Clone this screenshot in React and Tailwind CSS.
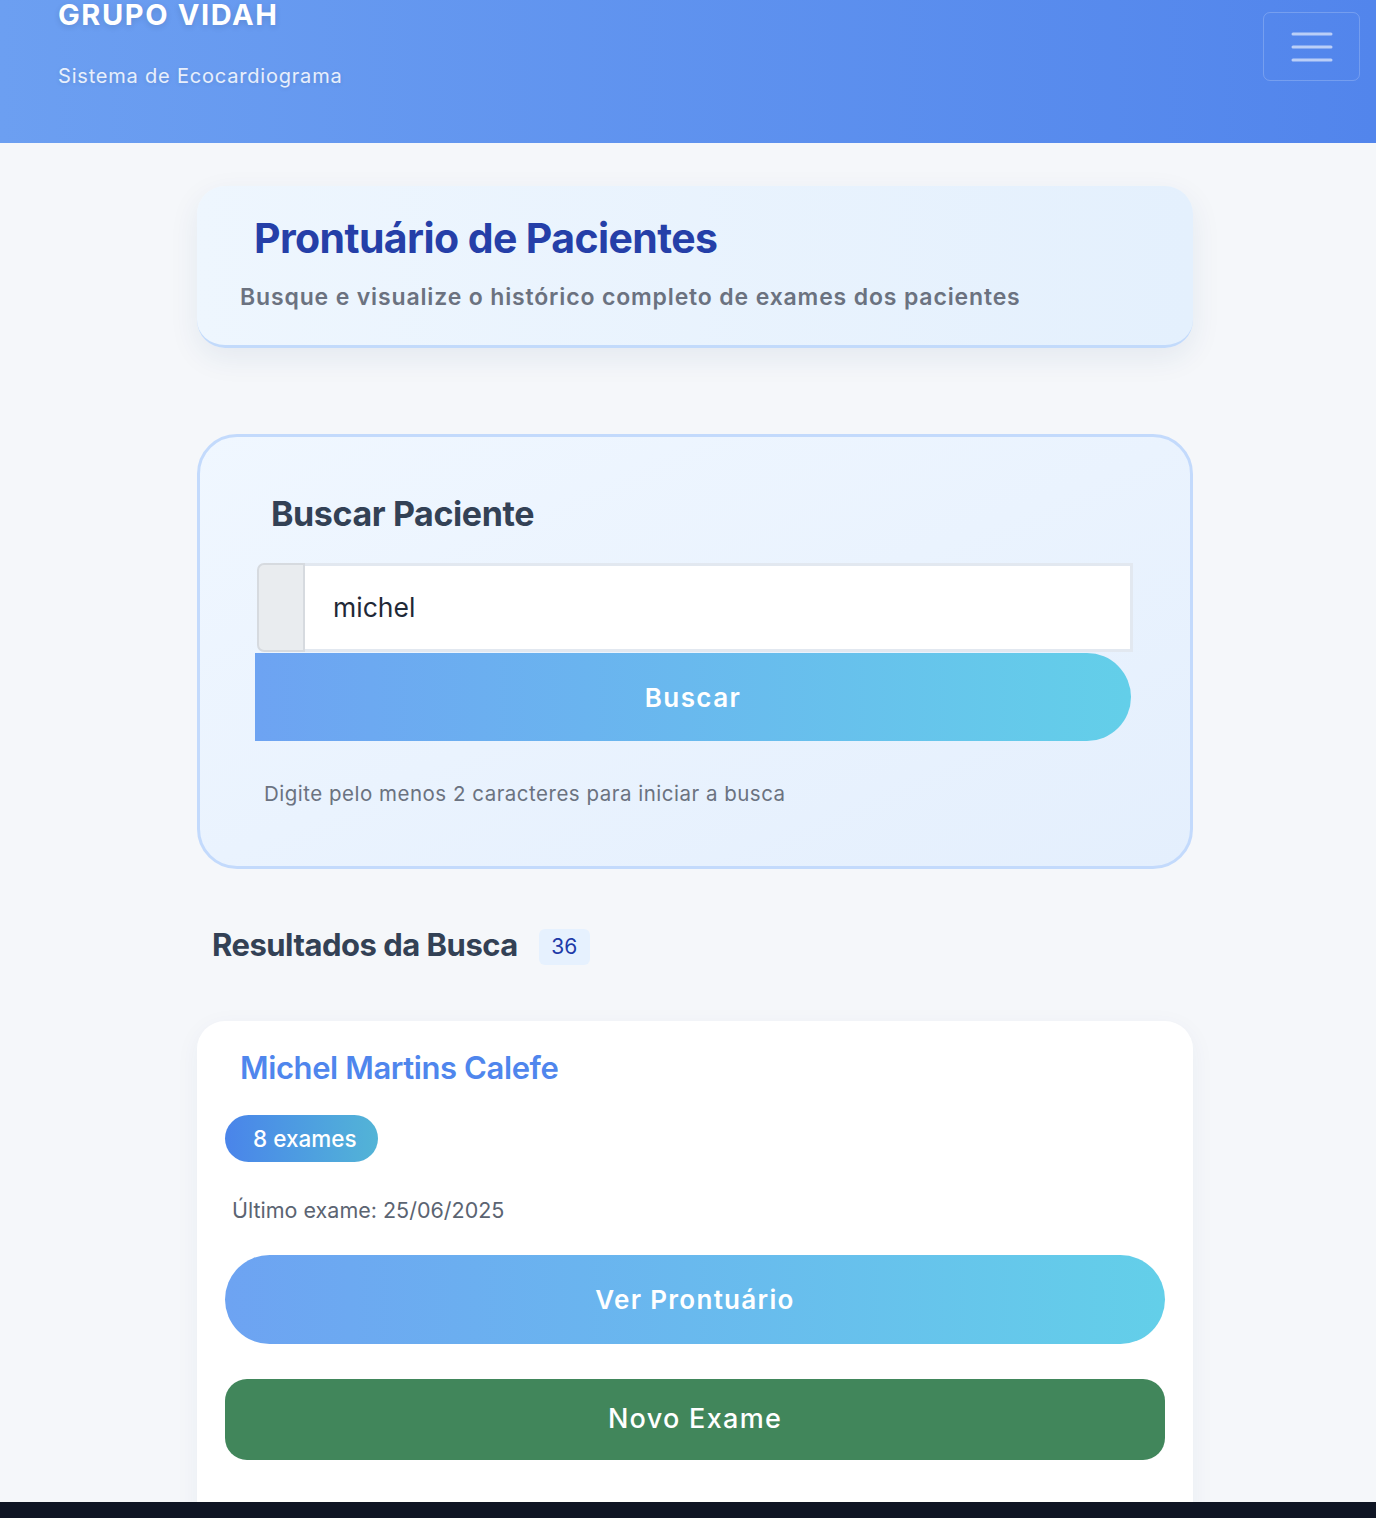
export default function App() {
  return (
    <div className="h-[1518px] flex flex-col bg-[#f5f7fa] overflow-hidden font-['Inter',sans-serif]">
      {/* header */}
      <header className="h-[143px] shrink-0 bg-gradient-to-r from-[#6c9ff1] to-[#5285ec] flex justify-between px-[58px] pr-[16px]">
        <div>
          <h1 className="text-[29px] leading-none font-bold tracking-[1.6px] text-white [text-shadow:0_2px_6px_rgba(0,0,0,0.12)]">
            GRUPO VIDAH
          </h1>
          <p className="mt-[37px] text-[20px] leading-none tracking-[0.8px] text-white/85 [text-shadow:0_1px_4px_rgba(0,0,0,0.1)]">
            Sistema de Ecocardiograma
          </p>
        </div>
        <button className="mt-[12px] w-[97px] h-[69px] rounded-[7px] border-[1.5px] border-white/20 flex items-center justify-center">
          <svg width="42" height="32" viewBox="0 0 42 32">
            <path d="M2 3h38M2 16h38M2 29h38" stroke="rgba(255,255,255,0.6)" strokeWidth="3" strokeLinecap="round" />
          </svg>
        </button>
      </header>

      <main className="flex-1 overflow-hidden">
        <div className="w-[996px] ml-[197px] pt-[43px]">
          {/* title card */}
          <div className="h-[162px] rounded-[28px] bg-gradient-to-r from-[#eef6fe] to-[#e4f0fd] border-b-[3px] border-[#c2dafb] shadow-[0_10px_30px_rgba(30,60,120,0.08)] pt-[28px]">
            <h2 className="ml-[57px] text-[41px] leading-[48px] font-bold tracking-[-0.6px] text-[#253fa8]">
              Prontuário de Pacientes
            </h2>
            <p className="ml-[43px] mt-[20px] text-[23px] leading-[30px] font-semibold tracking-[0.85px] text-[#6b7280]">
              Busque e visualize o histórico completo de exames dos pacientes
            </p>
          </div>

          {/* search card */}
          <div className="mt-[86px] h-[435px] rounded-[40px] border-[3px] border-[#c3dafc] bg-gradient-to-br from-[#f0f7ff] to-[#e4effd] px-[56px] pt-[57px]">
            <h3 className="ml-[15px] text-[34px] leading-[40px] font-bold tracking-[-0.4px] text-[#334155]">
              Buscar Paciente
            </h3>
            <div className="mt-[29px] ml-[1px] w-[876px] h-[89px] flex">
              <div className="w-[48px] bg-[#e9ecef] border-[2px] border-[#d6dadf] rounded-l-[7px]" />
              <div className="flex-1 bg-white border-[3px] border-l-0 border-[#e2e8f0] flex items-center pl-[28px] text-[26.5px] text-[#1f2937]">
                michel
              </div>
            </div>
            <button className="mt-[1px] -ml-[1px] w-[876px] h-[88px] bg-gradient-to-r from-[#6da3f2] to-[#63cfe9] rounded-r-[44px] text-white text-[26px] font-semibold tracking-[1.4px]">
              Buscar
            </button>
            <p className="mt-[41px] ml-[8px] text-[20.5px] leading-[24px] text-[#6b7280] tracking-[0.5px]">
              Digite pelo menos 2 caracteres para iniciar a busca
            </p>
          </div>

          {/* results header */}
          <div className="mt-[56px] ml-[15px] flex items-center gap-[21px]">
            <h3 className="text-[31px] leading-[40px] font-bold tracking-[-0.5px] text-[#334155]">
              Resultados da Busca
            </h3>
            <span className="mt-[4px] w-[51px] h-[36px] rounded-[6px] bg-[#e6f1fe] flex items-center justify-center text-[21px] text-[#1e3aa8]">
              36
            </span>
          </div>

          {/* patient card */}
          <div className="mt-[56px] h-[520px] rounded-t-[28px] bg-white shadow-[0_6px_24px_rgba(30,60,120,0.05)] px-[28px] pt-[27px]">
            <h4 className="ml-[15px] text-[31px] leading-[40px] font-semibold tracking-[-0.4px] text-[#4f86ed]">
              Michel Martins Calefe
            </h4>
            <span className="mt-[27px] inline-flex items-center h-[47px] pl-[28px] pr-[21px] rounded-full bg-gradient-to-r from-[#4a84ea] to-[#53b4d6] text-white text-[22.5px] font-medium">
              8 exames
            </span>
            <p className="mt-[36px] ml-[7px] text-[21.5px] leading-[24px] text-[#5b6472]">
              Último exame: 25/06/2025
            </p>
            <button className="mt-[33px] w-full h-[89px] rounded-full bg-gradient-to-r from-[#6da3f2] to-[#63cfe9] text-white text-[26px] font-semibold tracking-[1.3px]">
              Ver Prontuário
            </button>
            <button className="mt-[35px] w-full h-[81px] rounded-[22px] bg-[#41865b] text-white text-[27px] font-medium tracking-[1.3px]">
              Novo Exame
            </button>
          </div>
        </div>
      </main>

      <footer className="h-[16px] shrink-0 bg-[#0f1524]" />
    </div>
  );
}
